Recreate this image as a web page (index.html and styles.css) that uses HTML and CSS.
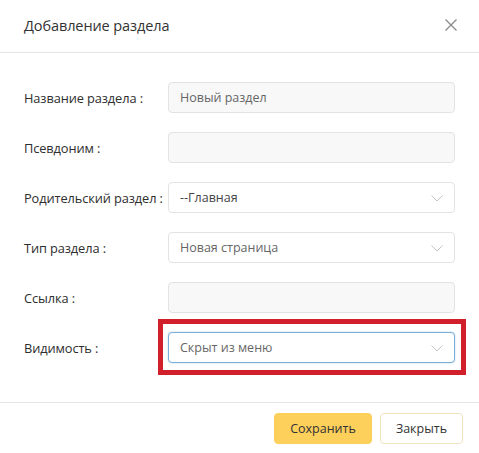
FILE: index.html
```
<!DOCTYPE html>
<html lang="ru">
<head>
<meta charset="utf-8">
<link rel="stylesheet" href="styles.css">
</head>
<body>
<div class="modal">
  <div class="modal-header">
    <div class="modal-title">Добавление раздела</div>
    <svg class="close" width="12" height="12" viewBox="0 0 12 12"><path d="M0.5 0.5 L11.5 11.5 M11.5 0.5 L0.5 11.5" stroke="#8a8a8a" stroke-width="1.3" fill="none"/></svg>
  </div>
  <div class="modal-body">
    <div class="row">
      <div class="label">Название раздела :</div>
      <div class="field input disabled">Новый раздел</div>
    </div>
    <div class="row">
      <div class="label">Псевдоним :</div>
      <div class="field input disabled"></div>
    </div>
    <div class="row">
      <div class="label">Родительский раздел :</div>
      <div class="field select dark">--Главная<svg class="chev" width="12" height="7" viewBox="0 0 12 7"><path d="M0.5 0.5 L6 6 L11.5 0.5" stroke="#c4c4c4" stroke-width="1" fill="none"/></svg></div>
    </div>
    <div class="row">
      <div class="label">Тип раздела :</div>
      <div class="field select">Новая страница<svg class="chev" width="12" height="7" viewBox="0 0 12 7"><path d="M0.5 0.5 L6 6 L11.5 0.5" stroke="#c4c4c4" stroke-width="1" fill="none"/></svg></div>
    </div>
    <div class="row">
      <div class="label">Ссылка :</div>
      <div class="field input disabled"></div>
    </div>
    <div class="row">
      <div class="label">Видимость :</div>
      <div class="field select focused">Скрыт из меню<svg class="chev" width="12" height="7" viewBox="0 0 12 7"><path d="M0.5 0.5 L6 6 L11.5 0.5" stroke="#c4c4c4" stroke-width="1" fill="none"/></svg><span class="highlight"></span></div>
    </div>
  </div>
  <div class="modal-footer">
    <button class="btn btn-primary">Сохранить</button>
    <button class="btn btn-default">Закрыть</button>
  </div>
</div>
</body>
</html>
```
FILE: styles.css
```
* { box-sizing: border-box; }
html, body { margin: 0; padding: 0; background: #fff; }
body { font-family: "Open Sans", "Noto Sans", sans-serif; color: #333; }
.modal { width: 479px; height: 453px; display: flex; flex-direction: column; }
.modal-header {
  height: 53px;
  border-bottom: 1px solid #e6e6e6;
  display: flex;
  align-items: center;
  justify-content: space-between;
  padding: 0 22px 2px 24px;
}
.modal-title { font-size: 14.5px; color: #333; letter-spacing: -0.1px; }
.close { display: block; }
.modal-body { padding: 29px 24px 0 24px; display: flex; flex-direction: column; gap: 19px; height: 349px; }
.row { display: flex; align-items: center; height: 31px; }
.label { width: 144px; font-size: 12.8px; color: #2e2e2e; letter-spacing: -0.1px; }
.field {
  position: relative;
  flex: none;
  width: 287px;
  height: 31px;
  border: 1px solid #e3e3e3;
  border-radius: 4px;
  display: flex;
  align-items: center;
  padding: 0 11px;
  font-size: 12.5px;
  color: #666;
  background: #fff;
}
.field.disabled { background: #f8f8f8; }
.field.dark { color: #444; }
.select { justify-content: space-between; }
.chev { display: block; margin-top: 2px; }
.focused { border-color: #78aed8; box-shadow: 0 0 2px rgba(120,174,216,0.5); }
.highlight {
  position: absolute;
  left: -11px; right: -12px; top: -14px; bottom: -13px;
  border: 5px solid #d21f2c;
  pointer-events: none;
}
.modal-footer {
  flex: 1;
  border-top: 1px solid #e6e6e6;
  display: flex;
  justify-content: flex-end;
  align-items: flex-start;
  gap: 8px;
  padding: 10px 16px 0 0;
}
.btn {
  font-family: "Open Sans", "Noto Sans", sans-serif;
  font-size: 12.5px;
  height: 31px;
  border-radius: 4px;
  color: #333;
  padding: 0;
  cursor: pointer;
}
.btn-primary { width: 98px; background: #fdcf5b; border: 1px solid #fdcf5b; }
.btn-default { width: 83px; background: #fff; border: 1px solid #f1e3bf; }
```
